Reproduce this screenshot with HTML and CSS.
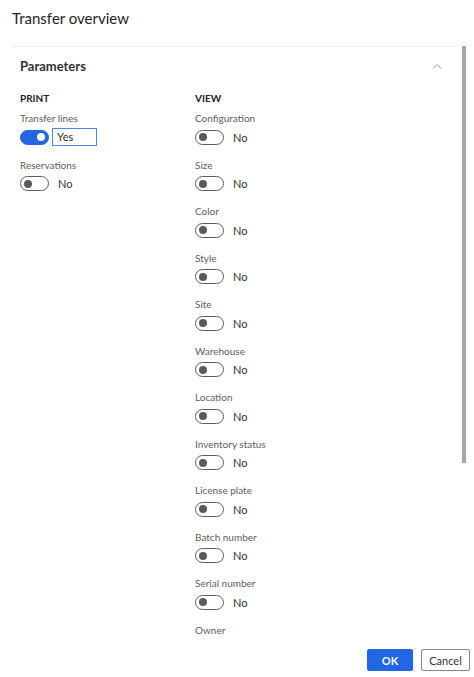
FILE: index.html
```html
<!DOCTYPE html>
<html>
<head>
<meta charset="utf-8">
<link rel="stylesheet" href="styles.css">
</head>
<body>
<div class="dialog">
  <div class="header"><h1 class="title">Transfer overview</h1></div>
  <div class="body">
    <div class="scrollbar"></div>
    <div class="section">
      <div class="section-head">
        <span class="section-title">Parameters</span>
        <svg class="chevron" width="10" height="6" viewBox="0 0 10 6"><path d="M1 5.5 L5 1.5 L9 5.5" fill="none" stroke="#8a9bb5" stroke-width="1"/></svg>
      </div>
      <div class="cols">
        <div class="col col-print">
          <div class="group-title">PRINT</div>
          <div class="field">
            <div class="label">Transfer lines</div>
            <div class="control">
              <span class="toggle on"><span class="knob"></span></span>
              <span class="value-box">Yes</span>
            </div>
          </div>
          <div class="field">
            <div class="label">Reservations</div>
            <div class="control"><span class="toggle"><span class="knob"></span></span><span class="value">No</span></div>
          </div>
        </div>
        <div class="col">
          <div class="group-title">VIEW</div>
          <div class="field"><div class="label">Configuration</div><div class="control"><span class="toggle"><span class="knob"></span></span><span class="value">No</span></div></div>
          <div class="field"><div class="label">Size</div><div class="control"><span class="toggle"><span class="knob"></span></span><span class="value">No</span></div></div>
          <div class="field"><div class="label">Color</div><div class="control"><span class="toggle"><span class="knob"></span></span><span class="value">No</span></div></div>
          <div class="field"><div class="label">Style</div><div class="control"><span class="toggle"><span class="knob"></span></span><span class="value">No</span></div></div>
          <div class="field"><div class="label">Site</div><div class="control"><span class="toggle"><span class="knob"></span></span><span class="value">No</span></div></div>
          <div class="field"><div class="label">Warehouse</div><div class="control"><span class="toggle"><span class="knob"></span></span><span class="value">No</span></div></div>
          <div class="field"><div class="label">Location</div><div class="control"><span class="toggle"><span class="knob"></span></span><span class="value">No</span></div></div>
          <div class="field"><div class="label">Inventory status</div><div class="control"><span class="toggle"><span class="knob"></span></span><span class="value">No</span></div></div>
          <div class="field"><div class="label">License plate</div><div class="control"><span class="toggle"><span class="knob"></span></span><span class="value">No</span></div></div>
          <div class="field"><div class="label">Batch number</div><div class="control"><span class="toggle"><span class="knob"></span></span><span class="value">No</span></div></div>
          <div class="field"><div class="label">Serial number</div><div class="control"><span class="toggle"><span class="knob"></span></span><span class="value">No</span></div></div>
          <div class="field"><div class="label">Owner</div></div>
        </div>
      </div>
    </div>
  </div>
  <div class="footer">
    <button class="btn btn-primary">OK</button>
    <button class="btn btn-default">Cancel</button>
  </div>
</div>
</body>
</html>
```
FILE: styles.css
```css
* { box-sizing: border-box; }
html, body { margin: 0; padding: 0; background: #fff; }
body {
  font-family: "Lato", "Noto Sans", sans-serif;
  color: #323130;
  width: 474px;
  height: 677px;
  overflow: hidden;
}
.dialog {
  display: flex;
  flex-direction: column;
  height: 677px;
}
.header {
  height: 46px;
  padding: 8px 0 0 12px;
  flex: none;
}
.title {
  margin: 0;
  font-size: 15px;
  font-weight: 400;
  line-height: 20px;
  color: #201f1e;
}
.body {
  position: relative;
  flex: 1;
  overflow: hidden;
  padding: 0 19px 0 12px;
}
.scrollbar {
  position: absolute;
  left: 462px;
  top: 0;
  width: 4px;
  height: 417px;
  background: #a6a6a6;
}
.section {
  border-top: 1px solid #f0efee;
}
.section-head {
  display: flex;
  align-items: center;
  justify-content: space-between;
  height: 38px;
  padding: 0 13px 0 8px;
}
.section-title {
  font-size: 13px;
  font-weight: 700;
  color: #323130;
}
.cols {
  display: flex;
  padding: 6px 0 0 8px;
}
.col-print { width: 175px; flex: none; }
.group-title {
  font-size: 10px;
  font-weight: 700;
  line-height: 14px;
  color: #201f1e;
  margin-bottom: 5px;
}
.field {
  height: 46.5px;
}
.label {
  font-size: 10px;
  line-height: 16px;
  color: #605e5c;
}
.control {
  display: flex;
  align-items: center;
  height: 22px;
}
.toggle {
  width: 29px;
  height: 15px;
  border: 1px solid #605e5c;
  border-radius: 8px;
  position: relative;
  flex: none;
  background: #fff;
}
.toggle .knob {
  position: absolute;
  left: 3px;
  top: 2.5px;
  width: 8px;
  height: 8px;
  border-radius: 50%;
  background: #5d5b59;
}
.toggle.on {
  background: #2266e3;
  border-color: #2266e3;
}
.toggle.on .knob {
  left: auto;
  right: 3px;
  background: #fff;
}
.value {
  margin-left: 9px;
  font-size: 11px;
  color: #323130;
}
.value-box {
  margin-left: 3px;
  width: 45px;
  height: 18px;
  border: 1px solid #4c87e8;
  font-size: 11px;
  line-height: 16px;
  padding-left: 4px;
  color: #323130;
}
.footer {
  flex: none;
  height: 37px;
  display: flex;
  justify-content: flex-end;
  align-items: flex-start;
  gap: 8px;
  padding: 9px 4px 0 0;
}
.btn {
  height: 22px;
  font-family: inherit;
  font-size: 11px;
  border-radius: 2px;
  padding: 0;
  cursor: pointer;
}
.btn-primary {
  width: 46px;
  background: #2266e3;
  border: 1px solid #2266e3;
  color: #fff;
  font-weight: 700;
}
.btn-default {
  width: 49px;
  background: #fff;
  border: 1px solid #8a8886;
  color: #323130;
}
```
